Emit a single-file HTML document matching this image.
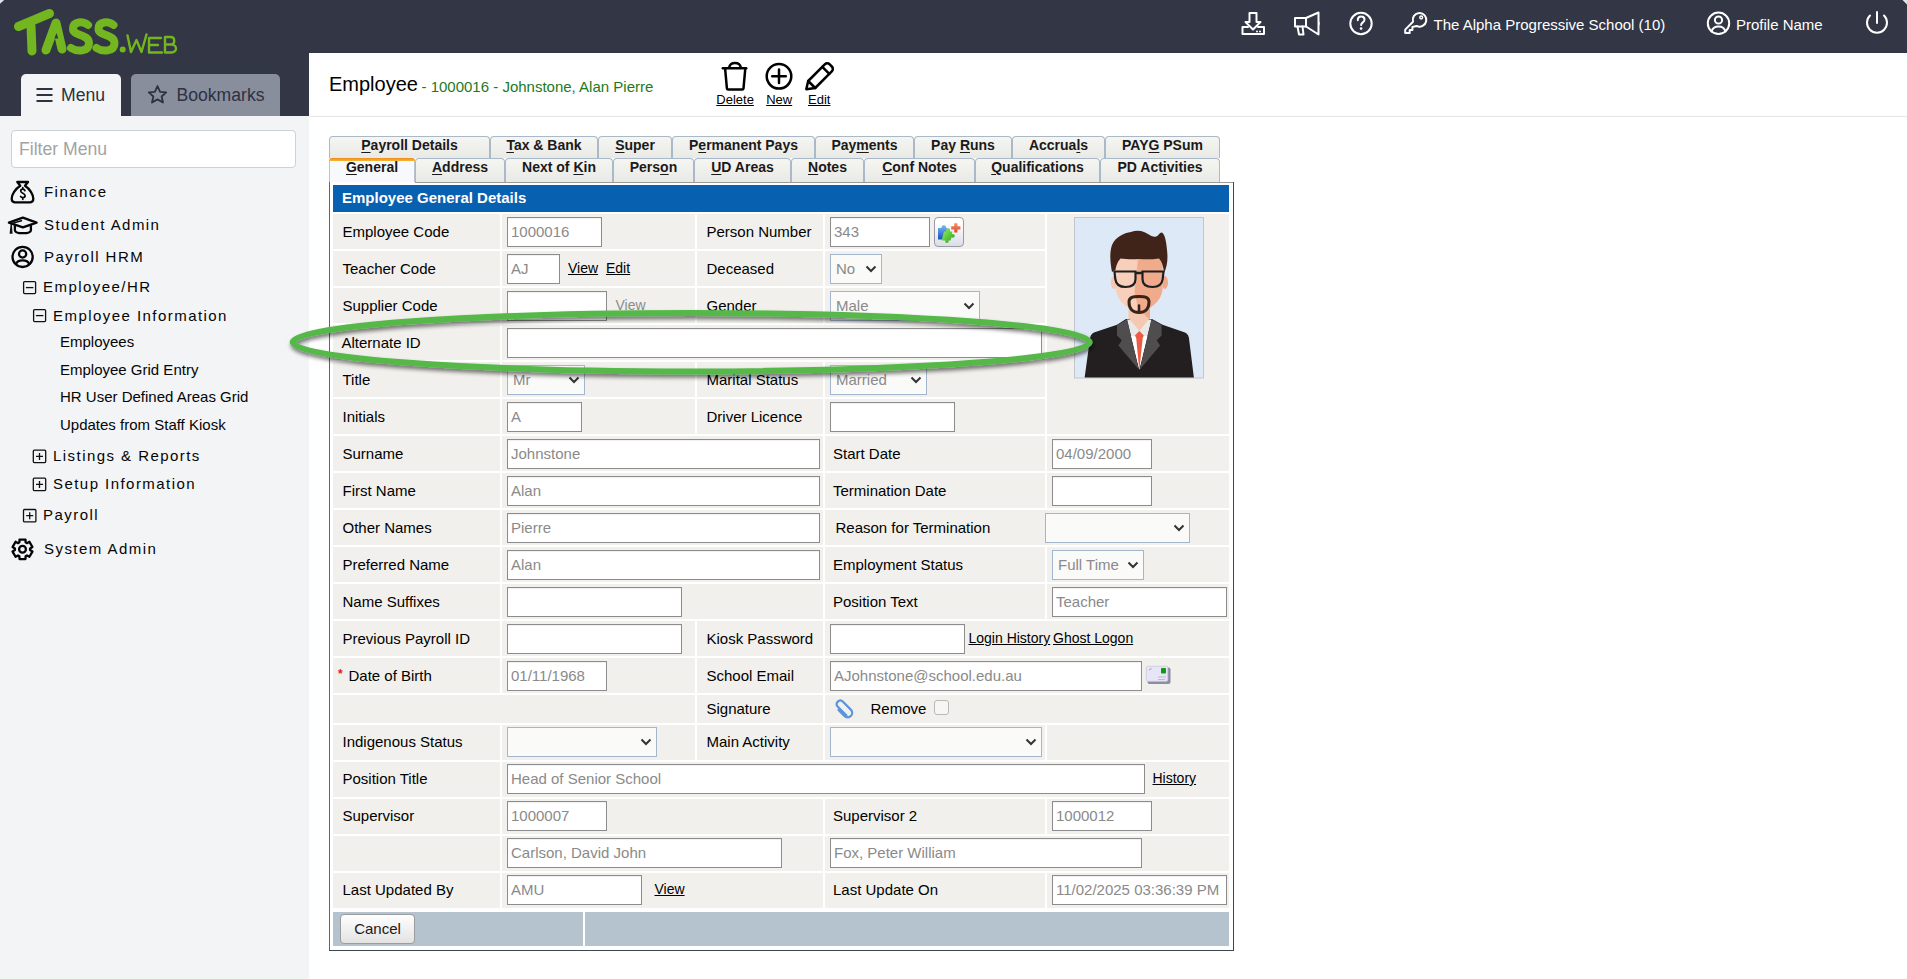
<!DOCTYPE html>
<html><head><meta charset="utf-8"><style>
html,body{margin:0;padding:0}
body{width:1907px;height:979px;position:relative;overflow:hidden;font-family:"Liberation Sans",sans-serif;background:#fff;color:#000}
.a{position:absolute}
.t{position:absolute;white-space:nowrap;line-height:1}
svg{position:absolute;overflow:visible}
/* header */
#hdr{left:0;top:0;width:1907px;height:53px;background:#323645}
#hdr2{left:0;top:53px;width:309px;height:63px;background:#323645}
.htxt{color:#fff;font-size:15px}
/* sidebar */
#side{left:0;top:116px;width:309px;height:863px;background:#f3f4f6}
.mt{font-size:15px;letter-spacing:1.45px;color:#050505}
.ms{font-size:15px;color:#050505}
/* content header */
#chdr{left:309px;top:116px;width:1598px;height:1px;background:#e6e6e6}
/* tabs */
.tab{position:absolute;box-sizing:border-box;border:1px solid #a9b9c9;border-bottom:none;border-radius:4px 4px 0 0;background:linear-gradient(#f5f5f2,#e9e9e5);font-weight:bold;font-size:14px;color:#1a1a1a;text-align:center;white-space:nowrap}
.tab.act{background:#f8f9fd;border-color:#b8c4d2;border-top:none;border-radius:4px 4px 0 0}
.tab.act:before{content:"";position:absolute;left:-1px;right:-1px;top:0;height:3px;border-radius:4px 4px 0 0;background:linear-gradient(#ee8a1e,#f7b733)}
.tt{position:absolute;left:0;right:0;text-align:center;line-height:1}
.c{position:absolute;background:#f1f0ec}
.l{position:absolute;font-size:15px;white-space:nowrap;color:#000}
.lk{text-decoration:underline;text-underline-offset:1px}
.in{position:absolute;box-sizing:border-box;height:30px;border:1px solid #8c8c8c;background:#fff;font-size:15px;line-height:28px;color:#8a8a8a;padding-left:3px;white-space:nowrap;overflow:hidden;box-shadow:inset 0 1px 1px rgba(0,0,0,.06)}
.sel{position:absolute;box-sizing:border-box;height:30px;border:1px solid #a3b6cd;background:#fafaf8;font-size:15px;line-height:28px;color:#8a8a8a;padding-left:5px;white-space:nowrap}
.sel svg{position:absolute}
.btn{position:absolute;box-sizing:border-box;border:1px solid #9c9c9c;border-radius:4px;background:linear-gradient(#fefefe,#e3e3e3);font-size:15px;line-height:28px;text-align:center;color:#1a1a1a}
.tab u{text-decoration:underline;text-underline-offset:2px}
</style></head><body>

<div class="a" id="hdr"></div>
<svg width="10" height="10" style="left:0;top:0"><path d="M0,0 H4.2 L0,3.8 Z M1907,0 H1902.5 L1907,4.5 Z" fill="#e2e3e6"/></svg>
<div class="a" id="hdr2"></div>

<!-- logo -->
<svg width="200" height="70" style="left:0;top:0" viewBox="0 0 200 70">
<g fill="none" stroke="#73b61f" stroke-linecap="round" stroke-linejoin="round">
<path d="M18.5,26.5 L49.5,13.5" stroke-width="9"/>
<path d="M31,26 L32,51" stroke-width="9"/>
<path d="M46,50 L56,23 L62,49" stroke-width="9"/>
<path d="M88,25 C83,21 73,21 73,29 C73,36 89,34 89,43 C89,52 77,52 71,48" stroke-width="8"/>
<path d="M113.5,25 C108.5,21 98.5,21 98.5,29 C98.5,36 114.5,34 114.5,43 C114.5,52 102.5,52 96.5,48" stroke-width="8"/>
<path d="M127.5,35.5 L131,52 L136.5,40 L141.5,52 L146.5,34.5" stroke-width="2.4"/>
<path d="M161,38 L149,38 L149,52.5 L162,52.5 M149,45 L158,45" stroke-width="2.4"/>
<path d="M165,37 L165,52.5 L171.5,52.5 C177.5,52.5 177.5,44.5 171.5,44.5 L165,44.5 M165,37 L170.5,37 C175.5,37 175.5,44.5 170.5,44.5" stroke-width="2.4"/>
</g>
<path d="M54.3,38.5 L58.3,38.5 L56.5,33 Z" fill="#323645"/>
<circle cx="122.7" cy="49.5" r="3" fill="#73b61f"/>
</svg>
<!-- menu tabs -->
<div class="a" style="left:21px;top:74px;width:100px;height:42px;background:#f3f4f6;border-radius:5px 5px 0 0"></div>
<div class="a" style="left:131px;top:74px;width:149px;height:42px;background:#898e9d;border-radius:5px 5px 0 0"></div>
<svg width="20" height="20" style="left:0;top:0">
<g stroke="#2d3142" stroke-width="2">
<path d="M36.5,89 H52.5 M36.5,95 H52.5 M36.5,101 H52.5"/>
</g></svg>
<div class="t" style="left:61px;top:87px;font-size:17.6px;color:#2d3142">Menu</div>
<svg width="20" height="20" style="left:0;top:0">
<path d="M157.5,86 L160.1,91.8 L166.2,92.4 L161.6,96.5 L163,102.5 L157.5,99.4 L152,102.5 L153.4,96.5 L148.8,92.4 L154.9,91.8 Z" fill="none" stroke="#2d3142" stroke-width="1.8" stroke-linejoin="round"/>
</svg>
<div class="t" style="left:176.5px;top:87px;font-size:17.6px;color:#2d3142">Bookmarks</div>

<!-- top right icons -->
<svg width="10" height="10" style="left:0;top:0">
<g fill="none" stroke="#fff" stroke-width="2" stroke-linejoin="round" stroke-linecap="round">
<path d="M1249.5,13 H1256.5 V22 H1260.5 L1253,29.5 L1245.5,22 H1249.5 Z"/>
<path d="M1248,27 H1242.5 V34 H1264 V27 H1258"/>
<path d="M1295,18 H1306 V26.5 H1295 Z"/>
<path d="M1306,18 L1318.5,12.5 V34.5 L1306,26.5"/>
<path d="M1297.5,26.5 L1299,34.5 H1303.5 L1302.5,26.5"/>
<circle cx="1361" cy="23.5" r="10.7"/>
<path d="M1357.8,20.2 C1357.8,17.8 1359.3,16.6 1361.1,16.6 C1363.1,16.6 1364.5,17.9 1364.5,19.7 C1364.5,22.3 1361.1,22.4 1361.1,25"/>
<circle cx="1713.5" cy="23.3" r="10.7" transform="translate(5,0)"/>
<circle cx="1718.5" cy="20" r="3.6"/>
<path d="M1711.5,31.5 C1712.5,28 1715,26.5 1718.5,26.5 C1722,26.5 1724.5,28 1725.5,31.5"/>
<path d="M1870,15.5 A10,10 0 1 0 1884,15.5"/>
<path d="M1877,12 V23"/>
<path d="M1413,21.8 L1405.2,29.6 V33.1 H1409.7 V29.9 H1412.4 V26.9 L1416.6,26 A6.8,6.8 0 1 0 1413,21.8 Z"/>
<circle cx="1421.2" cy="17.5" r="1.4" stroke-width="1.5"/>
</g>
<g fill="#fff">
<circle cx="1361.1" cy="28.6" r="1.3"/>
<circle cx="1257" cy="31.5" r="1"/><circle cx="1260" cy="31.5" r="1"/>
<path d="M1318.5,20.5 Q1321,23.5 1318.5,26.5 Z"/>
</g>
</svg>
<div class="t htxt" style="left:1433.5px;top:17px">The Alpha Progressive School (10)</div>
<div class="t htxt" style="left:1736px;top:17px">Profile Name</div>

<div class="a" id="side"></div>
<div class="a" style="left:11px;top:130px;width:285px;height:38px;box-sizing:border-box;border:1px solid #cdd0d4;border-radius:4px;background:#fff"></div>
<div class="t" style="left:19px;top:141px;font-size:17.6px;color:#a3a3a3">Filter Menu</div>
<svg width="10" height="10" style="left:0;top:0">
<g fill="none" stroke="#050505" stroke-width="2.3" stroke-linejoin="round" stroke-linecap="round">
<path d="M17.3,182 H28 L25,185.8 C29.8,189 33.3,194.5 33.3,198.8 C33.3,201.2 31.8,202.4 29.6,202.4 H15.4 C13.1,202.4 11.7,201.2 11.7,198.8 C11.7,194.5 15.2,189 20.3,185.8 Z"/>
<path d="M24.9,190.6 C24.5,189.7 23.8,189.2 22.8,189.2 C21.5,189.2 20.7,190 20.7,191.1 C20.7,193.6 25.1,193 25.1,195.8 C25.1,197 24.2,197.7 22.8,197.7 C21.8,197.7 21,197.2 20.6,196.4 M22.8,187.6 V189.2 M22.8,197.7 V199.3" stroke-width="1.7"/>
<path d="M8.9,222.6 L22.9,217.6 L36.6,222.6 L22.9,227.4 Z"/>
<path d="M14.9,225.4 V230.2 C14.9,232.2 18,233.2 22.9,233.2 C27.8,233.2 30.9,232.2 30.9,230.2 V225.4"/>
<path d="M11.3,223.6 L21.5,220.8" stroke-width="1.5"/>
<circle cx="22.6" cy="256.9" r="10.1"/>
<circle cx="22.6" cy="254" r="3.6"/>
<path d="M16,264 C16.9,261.3 19.2,260.3 22.6,260.3 C26,260.3 28.3,261.3 29.2,264"/>
<path d="M19.40,542.36 L19.49,539.56 L25.51,539.56 L25.60,542.36 L26.96,543.15 L29.43,541.82 L32.45,547.04 L30.06,548.51 L30.06,550.09 L32.45,551.56 L29.43,556.78 L26.96,555.45 L25.60,556.24 L25.51,559.04 L19.49,559.04 L19.40,556.24 L18.04,555.45 L15.57,556.78 L12.55,551.56 L14.94,550.09 L14.94,548.51 L12.55,547.04 L15.57,541.82 L18.04,543.15 Z"/>
<circle cx="22.5" cy="549.3" r="3.4"/>
</g>
<path d="M10.6,224 L9.6,233.8 H12.6 L11.9,224 Z" fill="#111"/>
<g fill="none" stroke="#111" stroke-width="1.3">
<rect x="23.6" y="281.6" width="12" height="12" rx="1"/><path d="M25.9,287.6 H33.4"/>
<rect x="33.6" y="309.6" width="12" height="12" rx="1"/><path d="M35.9,315.6 H43.4"/>
<rect x="33.3" y="450.2" width="12.4" height="12.4" rx="1"/><path d="M36,456.4 H43 M39.5,452.9 V459.9"/>
<rect x="33.3" y="478.2" width="12.4" height="12.4" rx="1"/><path d="M36,484.4 H43 M39.5,480.9 V487.9"/>
<rect x="23.5" y="509.5" width="12.4" height="12.4" rx="1"/><path d="M26.2,515.7 H33.2 M29.7,512.2 V519.2"/>
</g>
</svg>
<div class="t mt" style="left:44px;top:184.4px">Finance</div>
<div class="t mt" style="left:44px;top:217.4px">Student Admin</div>
<div class="t mt" style="left:44px;top:249.4px">Payroll HRM</div>
<div class="t mt" style="left:43px;top:279.4px">Employee/HR</div>
<div class="t mt" style="left:53px;top:307.9px">Employee Information</div>
<div class="t ms" style="left:60px;top:334.4px">Employees</div>
<div class="t ms" style="left:60px;top:362.4px">Employee Grid Entry</div>
<div class="t ms" style="left:60px;top:389.4px">HR User Defined Areas Grid</div>
<div class="t ms" style="left:60px;top:417.4px">Updates from Staff Kiosk</div>
<div class="t mt" style="left:53px;top:448.1px">Listings &amp; Reports</div>
<div class="t mt" style="left:53px;top:476.2px">Setup Information</div>
<div class="t mt" style="left:43px;top:507.4px">Payroll</div>
<div class="t mt" style="left:44px;top:541.4px">System Admin</div>
<div class="a" id="chdr"></div>
<div class="t" style="left:329px;top:74px;font-size:20px;color:#000">Employee</div>
<div class="t" style="left:421.5px;top:78.5px;font-size:15px;color:#1d7a1d">- 1000016 - Johnstone, Alan Pierre</div>
<svg width="10" height="10" style="left:0;top:0">
<g fill="none" stroke="#000" stroke-width="2.5" stroke-linejoin="round" stroke-linecap="round">
<path d="M722.8,68.3 H746.2"/>
<path d="M729.2,67.5 C729.7,64.2 731.2,63 735,63 C738.8,63 740.3,64.2 740.8,67.5"/>
<path d="M725.2,69.5 L726.9,88.4 C727,89.2 727.4,89.6 728.2,89.6 H742.2 C743,89.6 743.4,89.2 743.5,88.4 L745.2,69.5"/>
<circle cx="779" cy="76.3" r="12.3"/>
<path d="M772.2,76.3 H785.8 M779,69.5 V83.1"/>
<path d="M806.3,89.2 L808.2,81 L824.8,64.4 C826.2,63 828.3,63 829.7,64.4 L831.8,66.5 C833.2,67.9 833.2,70 831.8,71.4 L815.2,88 Z"/>
<path d="M822.3,66.9 L829.3,73.9 M808.2,81 L815.2,88"/>
</g></svg>
<div class="t" style="left:716.3px;top:93px;font-size:13px;text-decoration:underline">Delete</div>
<div class="t" style="left:766.2px;top:93px;font-size:13px;text-decoration:underline">New</div>
<div class="t" style="left:808px;top:93px;font-size:13px;text-decoration:underline">Edit</div>

<!-- tabs row 1 -->
<div class="tab" style="left:329px;top:136px;width:161px;height:22px"><span class="tt" style="top:1px"><u>P</u>ayroll Details</span></div>
<div class="tab" style="left:490px;top:136px;width:108px;height:22px"><span class="tt" style="top:1px"><u>T</u>ax &amp; Bank</span></div>
<div class="tab" style="left:598px;top:136px;width:74px;height:22px"><span class="tt" style="top:1px"><u>S</u>uper</span></div>
<div class="tab" style="left:672px;top:136px;width:143px;height:22px"><span class="tt" style="top:1px">P<u>e</u>rmanent Pays</span></div>
<div class="tab" style="left:815px;top:136px;width:99px;height:22px"><span class="tt" style="top:1px">Pay<u>m</u>ents</span></div>
<div class="tab" style="left:914px;top:136px;width:98px;height:22px"><span class="tt" style="top:1px">Pay <u>R</u>uns</span></div>
<div class="tab" style="left:1012px;top:136px;width:93px;height:22px"><span class="tt" style="top:1px">Accrua<u>l</u>s</span></div>
<div class="tab" style="left:1105px;top:136px;width:115px;height:22px"><span class="tt" style="top:1px">PAY<u>G</u> PSum</span></div>
<!-- tabs row 2 -->
<div class="tab act" style="left:329px;top:158px;width:86px;height:24px"><span class="tt" style="top:2px"><u>G</u>eneral</span></div>
<div class="tab" style="left:415px;top:158px;width:90px;height:24px"><span class="tt" style="top:1px"><u>A</u>ddress</span></div>
<div class="tab" style="left:505px;top:158px;width:108px;height:24px"><span class="tt" style="top:1px">Next of <u>K</u>in</span></div>
<div class="tab" style="left:613px;top:158px;width:81px;height:24px"><span class="tt" style="top:1px">Pers<u>o</u>n</span></div>
<div class="tab" style="left:694px;top:158px;width:97px;height:24px"><span class="tt" style="top:1px"><u>U</u>D Areas</span></div>
<div class="tab" style="left:791px;top:158px;width:73px;height:24px"><span class="tt" style="top:1px"><u>N</u>otes</span></div>
<div class="tab" style="left:864px;top:158px;width:111px;height:24px"><span class="tt" style="top:1px"><u>C</u>onf Notes</span></div>
<div class="tab" style="left:975px;top:158px;width:125px;height:24px"><span class="tt" style="top:1px"><u>Q</u>ualifications</span></div>
<div class="tab" style="left:1100px;top:158px;width:120px;height:24px"><span class="tt" style="top:1px">PD Act<u>i</u>vities</span></div>

<!-- form box -->
<div class="a" style="left:329px;top:182px;width:1px;height:769px;background:#666"></div>
<div class="a" style="left:415px;top:182px;width:819px;height:1px;background:#9a9a9a"></div>
<div class="a" style="left:1233px;top:182px;width:1px;height:769px;background:#3c4650"></div>
<div class="a" style="left:329px;top:950px;width:905px;height:1px;background:#3c4650"></div>

<!-- FORM START -->
<div class="c" style="left:333px;top:214px;width:167px;height:35px"></div>
<div class="c" style="left:502px;top:214px;width:193px;height:35px"></div>
<div class="c" style="left:697px;top:214px;width:126px;height:35px"></div>
<div class="c" style="left:825px;top:214px;width:220px;height:35px"></div>
<div class="c" style="left:1047px;top:214px;width:182px;height:220px"></div>
<div class="l" style="left:342.5px;top:214px;height:35px;line-height:35px">Employee Code</div>
<div class="in" style="left:507px;top:217px;width:95px">1000016</div>
<div class="l" style="left:706.5px;top:214px;height:35px;line-height:35px">Person Number</div>
<div class="in" style="left:830px;top:217px;width:100px">343</div>
<div class="c" style="left:333px;top:251px;width:167px;height:35px"></div>
<div class="c" style="left:502px;top:251px;width:193px;height:35px"></div>
<div class="c" style="left:697px;top:251px;width:126px;height:35px"></div>
<div class="c" style="left:825px;top:251px;width:220px;height:35px"></div>
<div class="l" style="left:342.5px;top:251px;height:35px;line-height:35px">Teacher Code</div>
<div class="in" style="left:507px;top:254px;width:53px">AJ</div>
<div class="l lk" style="left:568px;top:251px;height:35px;line-height:35px;font-size:14px">View</div>
<div class="l lk" style="left:606px;top:251px;height:35px;line-height:35px;font-size:14px">Edit</div>
<div class="l" style="left:706.5px;top:251px;height:35px;line-height:35px">Deceased</div>
<div class="sel" style="left:830px;top:254px;width:52px">No<svg width="12" height="8" style="right:4.5px;top:10px" viewBox="0 0 12 8"><path d="M1.5,1.5 L6,6 L10.5,1.5" fill="none" stroke="#333" stroke-width="2"/></svg></div>
<div class="c" style="left:333px;top:288px;width:167px;height:35px"></div>
<div class="c" style="left:502px;top:288px;width:193px;height:35px"></div>
<div class="c" style="left:697px;top:288px;width:126px;height:35px"></div>
<div class="c" style="left:825px;top:288px;width:220px;height:35px"></div>
<div class="l" style="left:342.5px;top:288px;height:35px;line-height:35px">Supplier Code</div>
<div class="in" style="left:507px;top:291px;width:100px"></div>
<div class="l" style="left:615.5px;top:288px;height:35px;line-height:35px;color:#8c8c8c;font-size:14px">View</div>
<div class="l" style="left:706.5px;top:288px;height:35px;line-height:35px">Gender</div>
<div class="sel" style="left:830px;top:291px;width:150px">Male<svg width="12" height="8" style="right:4.5px;top:10px" viewBox="0 0 12 8"><path d="M1.5,1.5 L6,6 L10.5,1.5" fill="none" stroke="#333" stroke-width="2"/></svg></div>
<div class="c" style="left:333px;top:325px;width:167px;height:35px"></div>
<div class="c" style="left:502px;top:325px;width:543px;height:35px"></div>
<div class="l" style="left:341.5px;top:325px;height:35px;line-height:35px">Alternate ID</div>
<div class="in" style="left:507px;top:328px;width:535px"></div>
<div class="c" style="left:333px;top:362px;width:167px;height:35px"></div>
<div class="c" style="left:502px;top:362px;width:193px;height:35px"></div>
<div class="c" style="left:697px;top:362px;width:126px;height:35px"></div>
<div class="c" style="left:825px;top:362px;width:220px;height:35px"></div>
<div class="l" style="left:342.5px;top:362px;height:35px;line-height:35px">Title</div>
<div class="sel" style="left:507px;top:365px;width:78px">Mr<svg width="12" height="8" style="right:4.5px;top:10px" viewBox="0 0 12 8"><path d="M1.5,1.5 L6,6 L10.5,1.5" fill="none" stroke="#333" stroke-width="2"/></svg></div>
<div class="l" style="left:706.5px;top:362px;height:35px;line-height:35px">Marital Status</div>
<div class="sel" style="left:830px;top:365px;width:97px">Married<svg width="12" height="8" style="right:4.5px;top:10px" viewBox="0 0 12 8"><path d="M1.5,1.5 L6,6 L10.5,1.5" fill="none" stroke="#333" stroke-width="2"/></svg></div>
<div class="c" style="left:333px;top:399px;width:167px;height:35px"></div>
<div class="c" style="left:502px;top:399px;width:193px;height:35px"></div>
<div class="c" style="left:697px;top:399px;width:126px;height:35px"></div>
<div class="c" style="left:825px;top:399px;width:220px;height:35px"></div>
<div class="l" style="left:342.5px;top:399px;height:35px;line-height:35px">Initials</div>
<div class="in" style="left:507px;top:402px;width:75px">A</div>
<div class="l" style="left:706.5px;top:399px;height:35px;line-height:35px">Driver Licence</div>
<div class="in" style="left:830px;top:402px;width:125px"></div>
<div class="c" style="left:333px;top:436px;width:167px;height:35px"></div>
<div class="c" style="left:502px;top:436px;width:321px;height:35px"></div>
<div class="l" style="left:342.5px;top:436px;height:35px;line-height:35px">Surname</div>
<div class="in" style="left:507px;top:439px;width:313px">Johnstone</div>
<div class="c" style="left:333px;top:473px;width:167px;height:35px"></div>
<div class="c" style="left:502px;top:473px;width:321px;height:35px"></div>
<div class="l" style="left:342.5px;top:473px;height:35px;line-height:35px">First Name</div>
<div class="in" style="left:507px;top:476px;width:313px">Alan</div>
<div class="c" style="left:333px;top:510px;width:167px;height:35px"></div>
<div class="c" style="left:502px;top:510px;width:321px;height:35px"></div>
<div class="l" style="left:342.5px;top:510px;height:35px;line-height:35px">Other Names</div>
<div class="in" style="left:507px;top:513px;width:313px">Pierre</div>
<div class="c" style="left:333px;top:547px;width:167px;height:35px"></div>
<div class="c" style="left:502px;top:547px;width:321px;height:35px"></div>
<div class="l" style="left:342.5px;top:547px;height:35px;line-height:35px">Preferred Name</div>
<div class="in" style="left:507px;top:550px;width:313px">Alan</div>
<div class="c" style="left:333px;top:584px;width:167px;height:35px"></div>
<div class="c" style="left:502px;top:584px;width:321px;height:35px"></div>
<div class="l" style="left:342.5px;top:584px;height:35px;line-height:35px">Name Suffixes</div>
<div class="in" style="left:507px;top:587px;width:175px"></div>
<div class="c" style="left:825px;top:436px;width:220px;height:35px"></div>
<div class="c" style="left:1047px;top:436px;width:182px;height:35px"></div>
<div class="l" style="left:833px;top:436px;height:35px;line-height:35px">Start Date</div>
<div class="in" style="left:1052px;top:439px;width:100px">04/09/2000</div>
<div class="c" style="left:825px;top:473px;width:220px;height:35px"></div>
<div class="c" style="left:1047px;top:473px;width:182px;height:35px"></div>
<div class="l" style="left:833px;top:473px;height:35px;line-height:35px">Termination Date</div>
<div class="in" style="left:1052px;top:476px;width:100px"></div>
<div class="c" style="left:825px;top:510px;width:404px;height:35px"></div>
<div class="l" style="left:835.5px;top:510px;height:35px;line-height:35px">Reason for Termination</div>
<div class="sel" style="left:1045px;top:513px;width:145px"><svg width="12" height="8" style="right:4.5px;top:10px" viewBox="0 0 12 8"><path d="M1.5,1.5 L6,6 L10.5,1.5" fill="none" stroke="#333" stroke-width="2"/></svg></div>
<div class="c" style="left:825px;top:547px;width:220px;height:35px"></div>
<div class="c" style="left:1047px;top:547px;width:182px;height:35px"></div>
<div class="l" style="left:833px;top:547px;height:35px;line-height:35px">Employment Status</div>
<div class="sel" style="left:1052px;top:550px;width:92px">Full Time<svg width="12" height="8" style="right:4.5px;top:10px" viewBox="0 0 12 8"><path d="M1.5,1.5 L6,6 L10.5,1.5" fill="none" stroke="#333" stroke-width="2"/></svg></div>
<div class="c" style="left:825px;top:584px;width:220px;height:35px"></div>
<div class="c" style="left:1047px;top:584px;width:182px;height:35px"></div>
<div class="l" style="left:833px;top:584px;height:35px;line-height:35px">Position Text</div>
<div class="in" style="left:1052px;top:587px;width:175px">Teacher</div>
<div class="c" style="left:333px;top:621px;width:167px;height:35px"></div>
<div class="c" style="left:502px;top:621px;width:193px;height:35px"></div>
<div class="c" style="left:697px;top:621px;width:126px;height:35px"></div>
<div class="c" style="left:825px;top:621px;width:404px;height:35px"></div>
<div class="l" style="left:342.5px;top:621px;height:35px;line-height:35px">Previous Payroll ID</div>
<div class="in" style="left:507px;top:624px;width:175px"></div>
<div class="l" style="left:706.5px;top:621px;height:35px;line-height:35px">Kiosk Password</div>
<div class="in" style="left:830px;top:624px;width:135px"></div>
<div class="l lk" style="left:968.5px;top:621px;height:35px;line-height:35px;font-size:14px">Login History</div>
<div class="l lk" style="left:1053px;top:621px;height:35px;line-height:35px;font-size:14px">Ghost Logon</div>
<div class="c" style="left:333px;top:658px;width:167px;height:35px"></div>
<div class="c" style="left:502px;top:658px;width:193px;height:35px"></div>
<div class="c" style="left:697px;top:658px;width:126px;height:35px"></div>
<div class="c" style="left:825px;top:658px;width:404px;height:35px"></div>
<div class="l" style="left:338px;top:668px;font-size:12px;line-height:12px;height:12px;color:#e8131b;font-weight:bold">*</div>
<div class="l" style="left:348.5px;top:658px;height:35px;line-height:35px">Date of Birth</div>
<div class="in" style="left:507px;top:661px;width:100px">01/11/1968</div>
<div class="l" style="left:706.5px;top:658px;height:35px;line-height:35px">School Email</div>
<div class="in" style="left:830px;top:661px;width:312px">AJohnstone@school.edu.au</div>
<div class="c" style="left:333px;top:695px;width:362px;height:28px"></div>
<div class="c" style="left:697px;top:695px;width:126px;height:28px"></div>
<div class="c" style="left:825px;top:695px;width:404px;height:28px"></div>
<div class="l" style="left:706.5px;top:695px;height:28px;line-height:28px">Signature</div>
<div class="l" style="left:870.5px;top:695px;height:28px;line-height:28px">Remove</div>
<div class="a" style="left:934px;top:700px;width:15px;height:15px;box-sizing:border-box;border:1px solid #b9b9b9;border-radius:3px;background:#f6f6f4"></div>
<div class="c" style="left:333px;top:725px;width:167px;height:35px"></div>
<div class="c" style="left:502px;top:725px;width:193px;height:35px"></div>
<div class="c" style="left:697px;top:725px;width:126px;height:35px"></div>
<div class="c" style="left:825px;top:725px;width:220px;height:35px"></div>
<div class="c" style="left:1047px;top:725px;width:182px;height:35px"></div>
<div class="l" style="left:342.5px;top:724px;height:35px;line-height:35px">Indigenous Status</div>
<div class="sel" style="left:507px;top:727px;width:150px"><svg width="12" height="8" style="right:4.5px;top:10px" viewBox="0 0 12 8"><path d="M1.5,1.5 L6,6 L10.5,1.5" fill="none" stroke="#333" stroke-width="2"/></svg></div>
<div class="l" style="left:706.5px;top:724px;height:35px;line-height:35px">Main Activity</div>
<div class="sel" style="left:830px;top:727px;width:212px"><svg width="12" height="8" style="right:4.5px;top:10px" viewBox="0 0 12 8"><path d="M1.5,1.5 L6,6 L10.5,1.5" fill="none" stroke="#333" stroke-width="2"/></svg></div>
<div class="c" style="left:333px;top:762px;width:167px;height:35px"></div>
<div class="c" style="left:502px;top:762px;width:727px;height:35px"></div>
<div class="l" style="left:342.5px;top:761px;height:35px;line-height:35px">Position Title</div>
<div class="in" style="left:507px;top:764px;width:638px">Head of Senior School</div>
<div class="l lk" style="left:1152.5px;top:761px;height:35px;line-height:35px;font-size:14px">History</div>
<div class="c" style="left:333px;top:799px;width:167px;height:35px"></div>
<div class="c" style="left:502px;top:799px;width:321px;height:35px"></div>
<div class="c" style="left:825px;top:799px;width:220px;height:35px"></div>
<div class="c" style="left:1047px;top:799px;width:182px;height:35px"></div>
<div class="l" style="left:342.5px;top:798px;height:35px;line-height:35px">Supervisor</div>
<div class="in" style="left:507px;top:801px;width:100px">1000007</div>
<div class="l" style="left:833px;top:798px;height:35px;line-height:35px">Supervisor 2</div>
<div class="in" style="left:1052px;top:801px;width:100px">1000012</div>
<div class="c" style="left:333px;top:836px;width:167px;height:35px"></div>
<div class="c" style="left:502px;top:836px;width:321px;height:35px"></div>
<div class="c" style="left:825px;top:836px;width:404px;height:35px"></div>
<div class="in" style="left:507px;top:838px;width:275px">Carlson, David John</div>
<div class="in" style="left:830px;top:838px;width:312px">Fox, Peter William</div>
<div class="c" style="left:333px;top:873px;width:167px;height:35px"></div>
<div class="c" style="left:502px;top:873px;width:321px;height:35px"></div>
<div class="c" style="left:825px;top:873px;width:220px;height:35px"></div>
<div class="c" style="left:1047px;top:873px;width:182px;height:35px"></div>
<div class="l" style="left:342.5px;top:872px;height:35px;line-height:35px">Last Updated By</div>
<div class="in" style="left:507px;top:875px;width:135px">AMU</div>
<div class="l lk" style="left:654.5px;top:872px;height:35px;line-height:35px;font-size:14px">View</div>
<div class="l" style="left:833px;top:872px;height:35px;line-height:35px">Last Update On</div>
<div class="in" style="left:1052px;top:875px;width:175px">11/02/2025 03:36:39 PM</div>
<div class="a" style="left:333px;top:912px;width:250px;height:34px;background:#b5c3cf"></div>
<div class="a" style="left:585px;top:912px;width:644px;height:34px;background:#b5c3cf"></div>
<div class="btn" style="left:340px;top:914px;width:75px;height:30px">Cancel</div>
<div class="a" style="left:333px;top:185px;width:896px;height:27px;background:#0860b0"></div>
<div class="t" style="left:342px;top:189.5px;font-size:15px;font-weight:bold;color:#fff">Employee General Details</div>
<div class="a" style="left:934px;top:217px;width:30px;height:30px;box-sizing:border-box;border:1.5px solid #9a9aa6;border-radius:4px;background:linear-gradient(#ffffff 20%,#dcdce6)"></div>
<svg width="10" height="10" style="left:0;top:0">
<defs><linearGradient id="pb" x1="0" y1="0" x2="0" y2="1"><stop offset="0" stop-color="#7ab8f2"/><stop offset="1" stop-color="#1550c0"/></linearGradient>
<linearGradient id="pg" x1="0" y1="0" x2="1" y2="1"><stop offset="0" stop-color="#9cf06a"/><stop offset="1" stop-color="#22a414"/></linearGradient>
<linearGradient id="pr" x1="0" y1="0" x2="0" y2="1"><stop offset="0" stop-color="#f7906a"/><stop offset="1" stop-color="#e04a2a"/></linearGradient></defs>
<path d="M938,228 H941.5 C941.5,226 942.5,225.3 943.8,225.3 C945.2,225.3 946.2,226 946.2,228 H947.5 V239.5 H938 Z" fill="url(#pb)"/>
<path d="M941.5,240.5 L944,231.5 H946.3 C945.8,229.5 946.8,228.3 948.2,228.3 C949.7,228.3 950.5,229.5 950,231.5 H952.5 L951.8,234 C953.5,233.6 955,234.4 954.8,236 C954.6,237.6 953,238 951.3,237.5 L950.5,240.5 H948.5 C949,242 948.3,243 947,243 C945.5,243 944.8,242 945.2,240.5 Z" fill="url(#pg)"/>
<path d="M954.2,223.2 H957.4 V226.2 H960.4 V229.4 H957.4 V232.4 H954.2 V229.4 H951.2 V226.2 H954.2 Z" fill="url(#pr)"/>
</svg>
<svg width="10" height="10" style="left:0;top:0">
<rect x="1147.5" y="667.5" width="23" height="16.5" rx="2" fill="#8c8ca2"/>
<rect x="1146.3" y="666.3" width="21.5" height="15" rx="1.5" fill="#e6e6f8" stroke="#c9c9dc" stroke-width="0.8"/>
<rect x="1161" y="668" width="5" height="5.5" rx="1" fill="#119a11"/>
<path d="M1158,677 H1166 M1158,679.5 H1165" stroke="#b8b8c8" stroke-width="0.9"/>
<path d="M1149,670 L1151.5,668.5" stroke="#b0b0b0" stroke-width="1.2"/>
</svg>
<svg width="10" height="10" style="left:0;top:0">
<path d="M846.5,715.5 L837.8,706.8 C836.2,705.2 836.2,703 837.8,701.6 C839.3,700.2 841.4,700.2 843,701.8 L850.8,709.6 C852.6,711.4 852.6,714.2 850.8,716 C849,717.8 846.2,717.8 844.4,716 L838.5,710" fill="none" stroke="#5b93dc" stroke-width="2.2" stroke-linecap="round"/>
</svg>
<svg width="10" height="10" style="left:0;top:0">
<defs><clipPath id="ph"><rect x="1074.5" y="217.5" width="129" height="160"/></clipPath>
<clipPath id="rh"><path d="M1139,250 H1175 V330 H1150 L1139,312 L1134.5,292 Z"/></clipPath></defs>
<rect x="1074.5" y="217.5" width="129" height="160.5" fill="#dde9f7" stroke="#c3c6cc" stroke-width="1"/>
<g clip-path="url(#ph)">
<path d="M1128.5,306 H1150 V321 H1128.5 Z" fill="#f6c7b1"/>
<path d="M1139,308 L1150,308 L1150,321 Z" fill="#eea98a"/>
<ellipse cx="1114" cy="282.5" rx="3.2" ry="6.5" fill="#f6c7b1"/>
<ellipse cx="1164.8" cy="282.5" rx="3.2" ry="6.5" fill="#eea98a"/>
<path d="M1116,255 H1162.5 V288 C1162.5,300 1150,311 1139,311 C1128,311 1116,300 1116,288 Z" fill="#f8cfba"/>
<path d="M1116,255 H1162.5 V288 C1162.5,300 1150,311 1139,311 C1128,311 1116,300 1116,288 Z" fill="#efab8c" clip-path="url(#rh)"/>
<path d="M1112,272 C1110,262 1109.5,252 1112,245 C1115,237 1124,233 1131,232 C1135,230.5 1140,230.3 1144,232 C1149,234 1152,237.5 1156,236.5 C1158.5,235.8 1160,232 1162,232.5 C1165,234 1166.5,243 1167,250 C1168,258 1167.5,266 1164,273 C1163.5,268 1162.5,262 1159,258.5 C1152,259.5 1145,259.5 1139,259 C1132,259.5 1125,259 1120.5,258.5 C1117,262 1116,267 1115.5,270 Z" fill="#40241a"/>
<g fill="none" stroke="#1f1f1f" stroke-width="2.2">
<path d="M1114.5,271.5 H1135.5 V279 C1135.5,284.5 1132,287 1125.5,287 C1119,287 1116,284.5 1115.3,279 Z"/>
<path d="M1142.5,271.5 H1163.5 L1162.7,279 C1162,284.5 1159,287 1152.5,287 C1146,287 1142.5,284.5 1142.5,279 Z"/>
<path d="M1135.5,273 H1142.5" stroke-width="2.6"/>
</g>
<path d="M1129,302 C1129,297.5 1132,296.5 1139,296.5 C1146,296.5 1149,297.5 1149,302 C1149,309 1145,312.5 1139,312.5 C1133,312.5 1129,309 1129,302 Z" fill="none" stroke="#3a2416" stroke-width="3"/>
<path d="M1139,305.5 V310.5" stroke="#3a2416" stroke-width="2.6" stroke-linecap="round"/>
<path d="M1126,319 L1117,324.8 L1094,332.5 C1091,334 1090,336.5 1089.8,340 L1084.5,378.5 H1194 L1189.2,340 C1189,336.5 1188,334 1185,332.5 L1162.6,324.8 L1152,319 Z" fill="#231f20"/>
<path d="M1127,319.5 L1151.5,319.5 L1139.3,369.5 Z" fill="#e8e8e8"/>
<path d="M1131,336 L1147.5,336 L1139.3,369.5 Z" fill="#ffffff"/>
<path d="M1127,319.5 L1117,325 V335.4 L1121.8,340.3 L1118.4,345.6 L1138.8,369.5 Z" fill="#4f4d4e"/>
<path d="M1151.5,319.5 L1161.6,325 V335.4 L1156.7,340.3 L1160.1,345.6 L1139.8,369.5 Z" fill="#4f4d4e"/>
<path d="M1128.6,318 H1150 L1139.3,330.8 Z" fill="#f6c7b1"/>
<path d="M1139.3,331 L1143.8,335.5 L1142.7,338 L1139.3,370.5 L1136.2,338 L1134.9,335.5 Z" fill="#ee5a43"/>
</g>
</svg>
<svg width="10" height="10" style="left:0;top:0">
<defs><filter id="sh" x="-10%" y="-60%" width="120%" height="220%"><feGaussianBlur in="SourceAlpha" stdDeviation="2.2"/><feOffset dx="1" dy="3" result="b"/><feComponentTransfer><feFuncA type="linear" slope="0.55"/></feComponentTransfer><feMerge><feMergeNode/><feMergeNode in="SourceGraphic"/></feMerge></filter></defs>
<ellipse cx="691.2" cy="342.2" rx="398.5" ry="29.2" fill="none" stroke="#54b848" stroke-width="6" filter="url(#sh)"/>
</svg>
<!-- FORM END -->
</body></html>
